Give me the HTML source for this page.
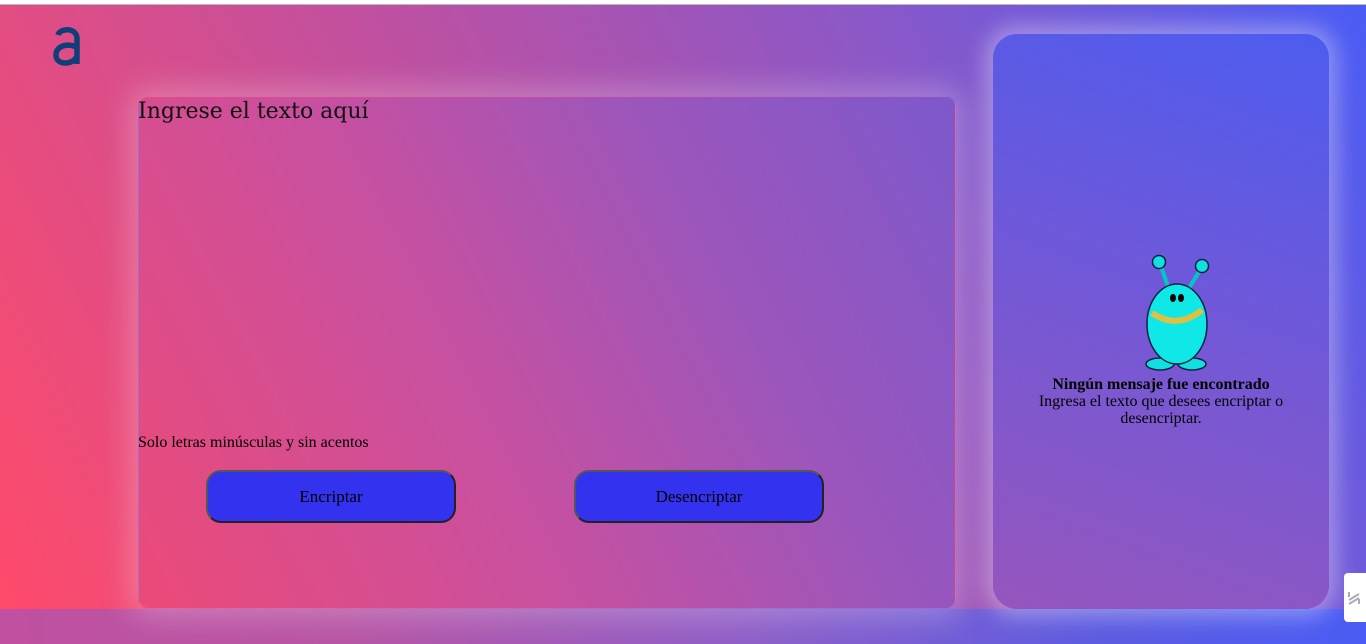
<!DOCTYPE html>
<html><head><meta charset="utf-8"><style>
*{margin:0;padding:0;box-sizing:border-box}
html,body{width:1366px;height:644px;overflow:hidden;background:#fff;font-family:"Liberation Serif",serif}
#top{position:absolute;left:0;top:0;width:1366px;height:5px;background:#fff;border-bottom:1px solid #bbb}
#main{position:absolute;left:0;top:5px;width:1366px;height:604px;background:linear-gradient(63deg,#ff4a6a 0%,#c050a0 40%,#8a58c8 70%,#4a5cf5 100%)}
#strip{position:absolute;left:0;top:609px;width:1366px;height:35px;background:linear-gradient(90deg,#c050a0 0%,#b855a5 25%,#8f5fc8 55%,#5e5ce0 80%,#4a5cf5 100%)}
.card{position:absolute;left:138px;top:96px;width:818px;height:513px;border-radius:10px;border:1px solid rgba(255,255,255,.15);box-shadow:0 0 30px 8px rgba(255,255,255,.25);background:linear-gradient(63deg,#ec4a78 0%,#c850a0 40%,#9c56bb 70%,#7d58cc 100%)}
.card h1{position:absolute;left:-1px;top:2px;font-weight:normal;color:#111;font-family:"DejaVu Serif","Liberation Serif",serif;font-size:22px}
.hint{position:absolute;left:-1px;top:337px;font-size:16px;color:#000}
.btn{position:absolute;top:373px;width:250px;height:53px;background:#3232ef;border:2px solid #222;border-top-color:#555;border-left-color:#555;border-radius:15px;font-size:17px;text-align:center;line-height:49px;color:#000}
.side{position:absolute;left:993px;top:34px;width:336px;height:575px;border-radius:24px;box-shadow:0 0 22px 8px rgba(255,255,255,.35);background:linear-gradient(200deg,#4d5cef 0%,#7358d6 50%,#9656bd 100%)}
.msg{position:absolute;left:0;top:342px;width:336px;text-align:center;font-size:16px;line-height:17px;color:#000}
.msg p{width:270px;margin:0 auto}
.tab{position:absolute;left:1344px;top:573px;width:22px;height:49px;background:#fff;border-radius:4px 0 0 4px}
</style></head><body>
<div id="top"></div>
<div id="main"></div>
<div id="strip"></div>
<svg style="position:absolute;left:52px;top:26px" width="30" height="40" viewBox="0 0 30 40"><path d="M6 9 C8 2,24 1,25 12 L25 38 M25 22 C20 17,4 18,4 29 C4 40,22 39,25 30" fill="none" stroke="#0e3f78" stroke-width="5.5"/></svg>
<div class="card">
<h1>Ingrese el texto aquí</h1>
<div class="hint">Solo letras minúsculas y sin acentos</div>
<div class="btn" style="left:67px">Encriptar</div>
<div class="btn" style="left:435px">Desencriptar</div>
</div>
<div class="side">
<svg style="position:absolute;left:140px;top:216px" width="90" height="125" viewBox="1133 250 90 125">
<g stroke="#102040" stroke-width="1.5">
<line x1="1161" y1="266" x2="1169" y2="290" stroke="#00c8c8" stroke-width="4"/>
<line x1="1200" y1="270" x2="1188" y2="290" stroke="#00c8c8" stroke-width="4"/>
<circle cx="1159" cy="262" r="6.5" fill="#10e0e0"/>
<circle cx="1202" cy="266" r="6.5" fill="#10e0e0"/>
<ellipse cx="1160" cy="364" rx="14" ry="6" fill="#10e0e0"/>
<ellipse cx="1192" cy="364" rx="14" ry="6" fill="#10e0e0"/>
<ellipse cx="1177" cy="324" rx="30" ry="40" fill="#10e8e8"/>
</g>
<path d="M1152 313 Q1177 330 1202 310" fill="none" stroke="#e0c040" stroke-width="6"/>
<ellipse cx="1173" cy="298" rx="3" ry="4" fill="#000"/><ellipse cx="1181" cy="298" rx="3" ry="4" fill="#000"/>
</svg>
<div class="msg"><b>Ningún mensaje fue encontrado</b><p>Ingresa el texto que desees encriptar o desencriptar.</p></div>
</div>
<div class="tab"><svg width="22" height="49" viewBox="0 0 22 49"><path d="M5 19 v5 M5 27 l10 -6 M5 31 l10 -6 M15 26 v5" stroke="#aab" stroke-width="2"/></svg></div>
</body></html>
